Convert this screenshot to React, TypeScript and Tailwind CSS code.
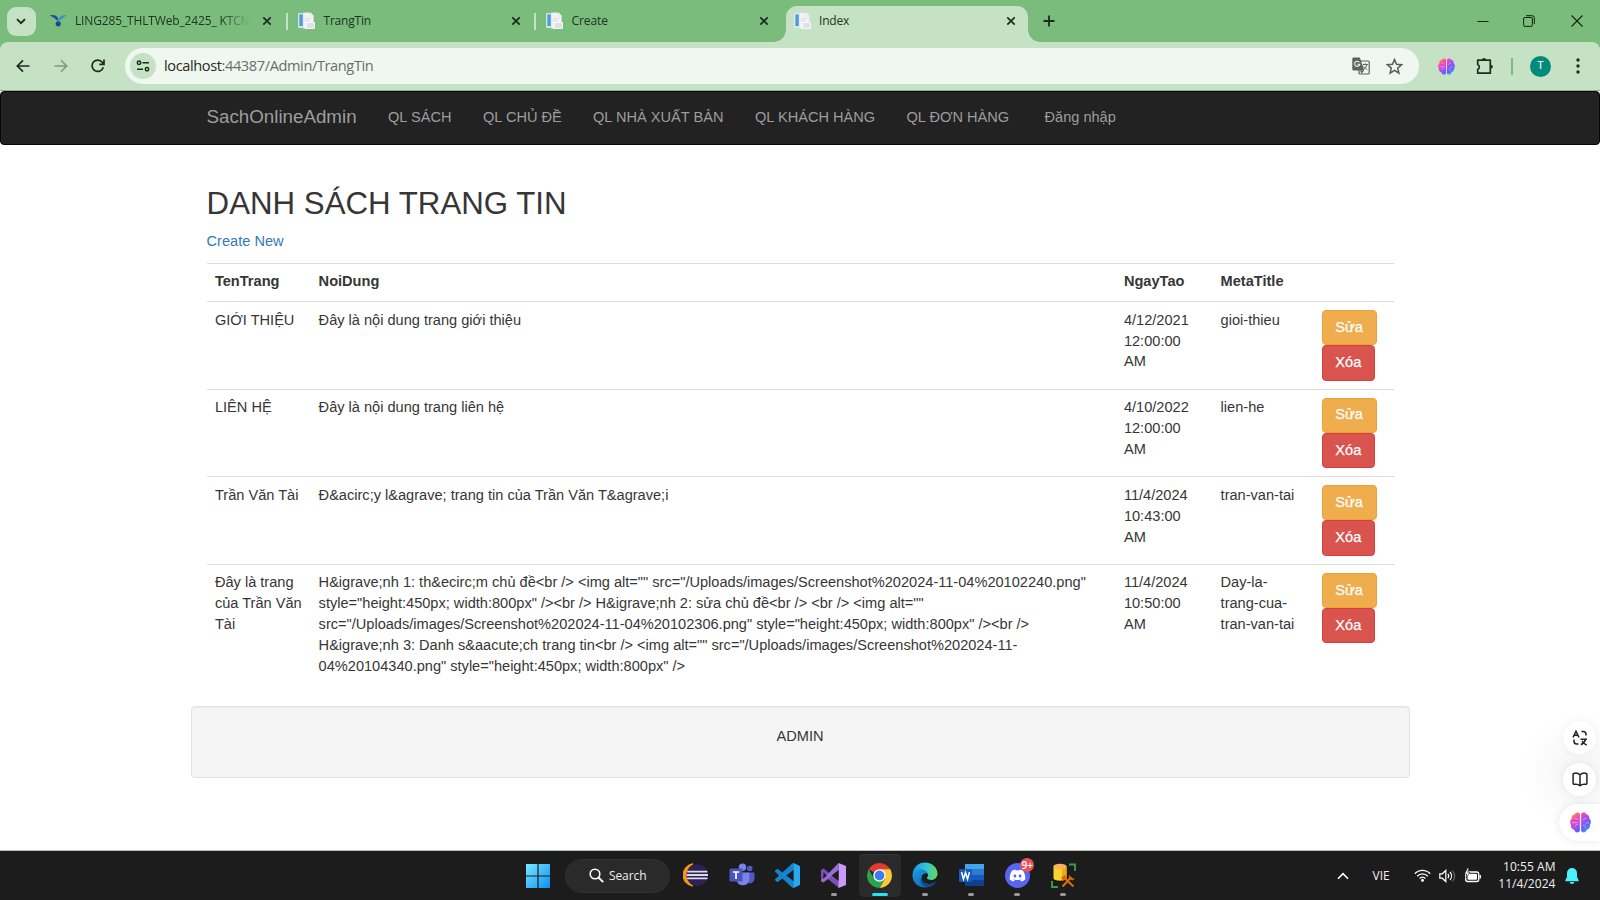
import type { ReactNode } from "react";
import { FaDiscord } from "react-icons/fa6";

function Slot({ w, children }: { w: string; children: ReactNode }) {
  return <div className={`flex h-full shrink-0 items-center justify-center ${w}`}>{children}</div>;
}

function PageIcon() {
  return (
    <svg width="18" height="18" viewBox="0 0 18 18" className="shrink-0">
      <path d="M.5 1.500h9v14h-9z" fill="#fff" stroke="#dfe6ec" strokeWidth=".6" />
      <path d="M1.300 2.300h3.500v12H1.300z" fill="#4b9ad8" />
      <path d="M5.500 .8h7l3 3v12.700h-10z" fill="#f1f2f6" stroke="#d9dbe2" strokeWidth=".6" />
      <path d="M12.500.8v3h3" fill="#fff" stroke="#ccd" strokeWidth=".5" />
      <path d="M7 6.500h6M7 8.500h4" stroke="#dcdde4" />
      <path d="M9 10.500h7.500v6H8z" fill="#dfe1ea" stroke="#fff" strokeWidth=".8" />
    </svg>
  );
}

function Close() {
  return (
    <svg width="10" height="10" viewBox="0 0 10 10">
      <path d="M1.300 1.300l7.400 7.400M8.700 1.300L1.300 8.700" stroke="#1d2b1e" strokeWidth="1.700" />
    </svg>
  );
}

function Brain({ size }: { size: number }) {
  return (
    <svg width={size} height={size} viewBox="0 0 20 20">
      <defs>
        <linearGradient id="brainGradient" x1="0.1" y1="0" x2=".9" y2="1">
          <stop offset="0" stopColor="#ffa02e" />
          <stop offset=".28" stopColor="#f545b8" />
          <stop offset=".5" stopColor="#a94df5" />
          <stop offset=".72" stopColor="#6a5cf6" />
          <stop offset="1" stopColor="#22c3f5" />
        </linearGradient>
      </defs>
      <path
        fill="url(#brainGradient)"
        d="M9.400 1.800C8.300-.1 5 .2 4.500 2.200 2.400 2.500 1.200 4.300 1.700 6.200 0 7.300-.4 10.400 1 12.200c-.4 2.200.8 4.200 2.800 4.500.9 3 4.500 3.600 5.600 1.400zM10.600 1.800c1.100-1.900 4.400-1.600 4.900.4 2.100.3 3.300 2.100 2.800 4 1.700 1.100 2.100 4.200.7 6 .4 2.200-.8 4.200-2.800 4.500-.9 3-4.500 3.600-5.600 1.400z"
      />
      <path
        d="M4.500 6.300c1.500-.2 2.500.4 3 1.500M2 10.200h5.500M5 13.700c.3-1.500 1.300-2 2.600-1.900M15.500 6.300c-1.500-.2-2.500.4-3 1.500M18 10.200c-2 .1-3 .6-3.500 1.800M12.500 13c1-.2 2 .4 2.300 1.800"
        fill="none"
        stroke="#fff"
        strokeOpacity=".5"
        strokeWidth=".9"
      />
    </svg>
  );
}

function Translate() {
  return (
    <svg width="18" height="18" viewBox="0 0 18 18" className="ml-auto">
      <rect x="7" y="4" width="10.200" height="13" rx="1" fill="#eff7f0" stroke="#5d635e" strokeWidth="1.200" />
      <path d="M1.500.5h6.300l4.600 13H1.500A1.200 1.200 0 0 1 .3 12.300V1.700A1.200 1.200 0 0 1 1.500.5z" fill="#5d635e" />
      <path d="M7.300 5.200A2.600 2.600 0 1 0 7.800 7.300H5.400" fill="none" stroke="#eff7f0" strokeWidth="1.100" />
      <path d="M10.800 7.500h5M13.300 6.300v1.200M15 7.500c-.5 2.200-1.800 3.700-3.500 5M12 9.300c.8 1.500 2 2.600 3.300 3.400" fill="none" stroke="#5d635e" strokeWidth="1" />
      <path d="M8 13.500h4.200L9.500 16.800z" fill="#5d635e" />
    </svg>
  );
}

function TabStrip() {
  return (
    <div className="flex h-[42px] items-center bg-[#7abc7c] text-[12px] text-[#1e3320]">
      <div className="ml-[6.500px] flex h-[29px] w-[29px] items-center justify-center rounded-[9px] bg-[#c5e2c5]">
        <svg width="10" height="7" viewBox="0 0 10 7">
          <path d="M1 1.200l4 4 4-4" fill="none" stroke="#1d2b1e" strokeWidth="1.900" />
        </svg>
      </div>
      <div className="ml-[14.500px] flex w-[238px] items-center">
        <svg width="17" height="14" viewBox="0 0 17 14" className="shrink-0">
          <path d="M0 1.500C4 .3 7 1.700 8.300 4.600L7.500 7C5.500 5 4 3.700 0 1.500z" fill="#1f4f9c" />
          <path d="M17 1.500C12.500.3 9.500 2.500 8.700 5.500L8 8.500C10 6.500 12 3.500 17 1.500z" fill="#2c8fd6" />
          <circle cx="8.200" cy="9.800" r="2.600" fill="#1c4795" />
        </svg>
        <div className="ml-[8px] w-[174px] overflow-hidden whitespace-nowrap [mask-image:linear-gradient(to_right,black_84%,transparent_100%)]">
          <span className="tracking-[-0.150px]">LING285_THLTWeb_2425_ KTCN</span>
        </div>
        <div className="ml-[13px]">
          <Close />
        </div>
        <div className="ml-auto h-[17px] w-[2px] bg-[#c5e2c5]" />
      </div>
      <div className="flex w-[248px] items-center">
        <div className="ml-[10px]"><PageIcon /></div>
        <span className="ml-[7.500px] w-[187.500px] tracking-[-0.2px]">TrangTin</span>
        <Close />
        <div className="ml-auto h-[17px] w-[2px] bg-[#c5e2c5]" />
      </div>
      <div className="flex w-[238px] items-center">
        <div className="ml-[9.500px]"><PageIcon /></div>
        <span className="ml-[8px] w-[187.500px] tracking-[-0.1px]">Create</span>
        <Close />
      </div>
      <div className="h-[12px] w-[12px] self-end bg-[radial-gradient(circle_at_0_0,#7abc7c_11.500px,#c5e2c5_12px)]" />
      <div className="flex h-[36px] w-[242px] items-center self-end rounded-t-[11px] bg-[#c5e2c5] pb-[6px]">
        <div className="ml-[8px]"><PageIcon /></div>
        <span className="ml-[7px] w-[187px] tracking-[-0.2px]">Index</span>
        <Close />
      </div>
      <div className="h-[12px] w-[12px] self-end bg-[radial-gradient(circle_at_100%_0,#7abc7c_11.500px,#c5e2c5_12px)]" />
      <svg width="12" height="12" viewBox="0 0 12 12" className="ml-[3px]">
        <path d="M6 .5v11M.5 6h11" stroke="#1d2b1e" strokeWidth="1.800" />
      </svg>
      <div className="ml-auto flex h-full items-center pr-[17px]">
        <svg width="12" height="12" viewBox="0 0 12 12">
          <path d="M.5 6.500h11" stroke="#14230f" />
        </svg>
        <svg width="12" height="12" viewBox="0 0 12 12" className="ml-[34.500px]">
          <rect x=".6" y="2.500" width="8.800" height="8.900" rx="1.500" fill="none" stroke="#14230f" />
          <path d="M3 .7h6a2.300 2.300 0 0 1 2.300 2.300v6" fill="none" stroke="#14230f" />
        </svg>
        <svg width="12" height="12" viewBox="0 0 12 12" className="ml-[36px]">
          <path d="M.5.5l11 11M11.500.5l-11 11" stroke="#14230f" strokeWidth="1.100" />
        </svg>
      </div>
    </div>
  );
}

function Toolbar() {
  return (
    <div className="bg-[#7abc7c]">
      <div className="flex h-[49px] items-center rounded-t-[8px] border-b border-[#92ae93] bg-[#c5e2c5]">
        <Slot w="w-[46px]">
          <svg width="14" height="14" viewBox="0 0 14 14">
            <path d="M13.500 7H1.500M7 1.300L1.300 7 7 12.700" fill="none" stroke="#1f2b20" strokeWidth="1.700" />
          </svg>
        </Slot>
        <Slot w="w-[29px]">
          <svg width="14" height="14" viewBox="0 0 14 14">
            <path d="M.5 7h12M7 1.300L12.700 7 7 12.700" fill="none" stroke="#829783" strokeWidth="1.600" />
          </svg>
        </Slot>
        <Slot w="w-[46px]">
          <svg width="14" height="14" viewBox="0 0 14 14">
            <path d="M12.300 8.300A5.700 5.700 0 1 1 11.300 3.200L12.800 5M13 .6V5.300H8.300" fill="none" stroke="#1f2b20" strokeWidth="1.700" />
          </svg>
        </Slot>
        <div className="ml-[4px] flex h-[36px] w-[1294px] items-center rounded-full bg-[#eff7f0]">
          <div className="ml-[5px] flex h-[26px] w-[26px] items-center justify-center rounded-full bg-[#c5e2c5]">
            <svg width="14" height="12" viewBox="0 0 14 12">
              <g fill="none" stroke="#1f2b20" strokeWidth="1.500">
                <circle cx="3" cy="2.700" r="1.700" />
                <path d="M6.500 2.700H13M1 9.300h6" />
                <circle cx="11" cy="9.300" r="1.700" />
              </g>
            </svg>
          </div>
          <div className="ml-[8px] text-[14.600px] tracking-[-0.4px] text-[#66706a]">
            <span className="text-[#1f2b20]">localhost</span>:44387/Admin/TrangTin
          </div>
          <Translate />
          <svg width="17" height="17" viewBox="0 0 17 17" className="mr-[16px] ml-[16px]">
            <path
              d="M8.500 1.600l2 4.700 5.100.4-3.900 3.400 1.200 5-4.400-2.700-4.400 2.700 1.200-5L1.400 6.700l5.100-.4z"
              fill="none"
              stroke="#555e57"
              strokeWidth="1.500"
            />
          </svg>
        </div>
        <div className="ml-[19px]"><Brain size={17} /></div>
        <svg width="18" height="18" viewBox="0 0 18 18" className="ml-[21px]">
          <path
            d="M1.700 3.200h12.600v13H1.700v-3.800c2.200-.6 2.200-4 0-4.600z"
            fill="none"
            stroke="#1f2b20"
            strokeWidth="1.700"
            strokeLinejoin="round"
          />
          <path d="M6 2.900a2 2 0 0 1 4 0zM14.800 7.700a2 2 0 0 1 0 4z" fill="#1f2b20" />
        </svg>
        <div className="ml-[17px] h-[17px] w-[2px] bg-[#7abc7c]" />
        <div className="ml-[17px] flex h-[21px] w-[21px] items-center justify-center rounded-full bg-[#048a7b] font-[Roboto] text-[11px] text-white">
          T
        </div>
        <svg width="4" height="16" viewBox="0 0 4 16" className="ml-[25px]">
          <g fill="#1f2b20">
            <circle cx="2" cy="2" r="1.700" />
            <circle cx="2" cy="8" r="1.700" />
            <circle cx="2" cy="14" r="1.700" />
          </g>
        </svg>
      </div>
    </div>
  );
}

type Row = { name: string; body: string[]; date: string[]; meta: string[] };

const rows: Row[] = [
  {
    name: "GIỚI THIỆU",
    body: ["Đây là nội dung trang giới thiệu"],
    date: ["4/12/2021", "12:00:00", "AM"],
    meta: ["gioi-thieu"],
  },
  {
    name: "LIÊN HỆ",
    body: ["Đây là nội dung trang liên hệ"],
    date: ["4/10/2022", "12:00:00", "AM"],
    meta: ["lien-he"],
  },
  {
    name: "Trần Văn Tài",
    body: ["Đ&acirc;y l&agrave; trang tin của Trần Văn T&agrave;i"],
    date: ["11/4/2024", "10:43:00", "AM"],
    meta: ["tran-van-tai"],
  },
  {
    name: "Đây là trang\ncủa Trần Văn\nTài",
    body: [
      'H&igrave;nh 1: th&ecirc;m chủ đề<br /> <img alt="" src="/Uploads/images/Screenshot%202024-11-04%20102240.png"',
      'style="height:450px; width:800px" /><br /> H&igrave;nh 2: sửa chủ đề<br /> <br /> <img alt=""',
      'src="/Uploads/images/Screenshot%202024-11-04%20102306.png" style="height:450px; width:800px" /><br />',
      'H&igrave;nh 3: Danh s&aacute;ch trang tin<br /> <img alt="" src="/Uploads/images/Screenshot%202024-11-',
      '04%20104340.png" style="height:450px; width:800px" />',
    ],
    date: ["11/4/2024", "10:50:00", "AM"],
    meta: ["Day-la-", "trang-cua-", "tran-van-tai"],
  },
];

const grid = "grid grid-cols-[103.700px_805.300px_96.700px_101px_80.800px] border-t border-[#dddddd]";
const cell = "whitespace-pre px-[8.330px] pt-[7.700px] pb-[8.800px]";

function Site() {
  return (
    <div className="h-[760px] bg-white font-['Liberation_Sans',Arial,sans-serif] text-[14.590px] leading-[20.833px] text-[#363636]">
      <nav className="flex h-[54px] items-center rounded-[4px] border border-[#080808] bg-[#222222] pb-[1.500px] pl-[205.500px] text-[#9d9d9d]">
        <span className="w-[181.500px] text-[18.750px]">SachOnlineAdmin</span>
        <span className="w-[95px]">QL SÁCH</span>
        <span className="w-[110px]">QL CHỦ ĐỀ</span>
        <span className="w-[162px]">QL NHÀ XUẤT BẢN</span>
        <span className="w-[151.500px]">QL KHÁCH HÀNG</span>
        <span className="w-[138px]">QL ĐƠN HÀNG</span>
        <span>Đăng nhập</span>
      </nav>
      <main className="ml-[206.600px] w-[1187.500px] pt-[42px]">
        <h2 className="text-[31.250px] leading-[34.400px]">DANH SÁCH TRANG TIN</h2>
        <div className="mt-[9.500px] text-[#337ab7]">Create New</div>
        <div className="mt-[11px]">
          <div className={`${grid} font-bold`}>
            <div className={cell}>TenTrang</div>
            <div className={cell}>NoiDung</div>
            <div className={cell}>NgayTao</div>
            <div className={cell}>MetaTitle</div>
          </div>
          {rows.map((r) => (
            <div key={r.name} className={grid}>
              <div className={cell}>{r.name}</div>
              <div className={cell}>{r.body.join("\n")}</div>
              <div className={cell}>{r.date.join("\n")}</div>
              <div className={cell}>{r.meta.join("\n")}</div>
              <div className="flex flex-col items-start px-[8.330px] py-[8.100px] text-white [-webkit-text-stroke:0.25px_white]">
                <div className="flex h-[35.200px] w-[55px] items-center justify-center rounded-[4px] border border-[#eea236] bg-[#f0ad4e] pb-[1px]">
                  Sửa
                </div>
                <div className="flex h-[35.200px] w-[53.500px] items-center justify-center rounded-[4px] border border-[#d43f3a] bg-[#d9534f] pb-[1px]">
                  Xóa
                </div>
              </div>
            </div>
          ))}
        </div>
      </main>
      <footer className="mx-auto mt-[20.500px] h-[72.500px] w-[1219px] rounded-[4px] border border-[#e3e3e3] bg-[#f5f5f5] pt-[19.300px] text-center shadow-[inset_0_1px_1px_rgba(0,0,0,0.05)]">
        ADMIN
      </footer>
    </div>
  );
}

function SideButtons() {
  return (
    <div className="absolute top-[721px] right-0 flex w-[41px] flex-col items-center">
      <div className="flex h-[33px] w-[33px] items-center justify-center rounded-full bg-white shadow-[0_35px_45px_12px_rgba(0,0,0,0.07),0_0_8px_rgba(0,0,0,0.05)]">
        <svg width="16" height="16" viewBox="0 0 16 16" fill="none" stroke="#222" strokeWidth="1.500">
          <path d="M1 7.500L4 1.200 7 7.500M2 5.300h4M9.500 1.500h1.700c1.800 0 2.800 1 2.800 2.800v1.200M2 9.500v1.700C2 13 3 14 4.800 14h1.700M8.500 9.300h6.500M13.500 9.500c-.8 2.500-2.500 4.300-4.700 5.200M10 11c1 2 2.500 3.300 4.800 3.900" />
        </svg>
      </div>
      <div className="mt-[9px] flex h-[33px] w-[33px] items-center justify-center rounded-full bg-white shadow-[0_0_8px_rgba(0,0,0,0.07)]">
        <svg width="16" height="15" viewBox="0 0 16 15" fill="none" stroke="#222" strokeWidth="1.500" strokeLinejoin="round">
          <path d="M8 2.800C6 1 3.500.8 1.800 1.500a1 1 0 0 0-.7 1v8.800c0 .7.600 1.100 1.300 1 2-.3 4 0 5.600 1.400 1.600-1.400 3.600-1.700 5.600-1.400.7.100 1.300-.3 1.300-1V2.500a1 1 0 0 0-.7-1C12.500.8 10 1 8 2.800zM8 2.800v10.700" />
        </svg>
      </div>
      <div className="mt-[8px] flex h-[37px] w-[41px] items-center justify-center rounded-l-full bg-white pl-[1px] shadow-[0_0_8px_rgba(0,0,0,0.1)]">
        <Brain size={21} />
      </div>
    </div>
  );
}

function Eclipse() {
  return (
    <svg width="26" height="24" viewBox="0 0 26 24">
      <path d="M10 .8A11.300 11.300 0 0 0 10 23.200 13 13 0 0 1 10 .8z" fill="#f7941e" stroke="#f7941e" strokeWidth="1.200" />
      <circle cx="14.300" cy="12" r="10.800" fill="#2c2255" />
      <path d="M4.200 8.600h20.200M3.700 12h21.300M4.200 15.400h20.200" stroke="#dedbe9" strokeWidth="1.900" />
    </svg>
  );
}

function Teams() {
  return (
    <svg width="26" height="24" viewBox="0 0 26 24">
      <circle cx="20.700" cy="5.500" r="2.800" fill="#5059c9" />
      <path d="M17 9.500h7.500c.6 0 1 .4 1 1V16a4.500 4.500 0 0 1-7 3.600z" fill="#5059c9" />
      <circle cx="13.500" cy="4.300" r="3.700" fill="#7b83eb" />
      <path d="M8 9.500h11.300c.6 0 1 .4 1 1V17a6.500 6.500 0 0 1-12.800 0z" fill="#7b83eb" />
      <rect x=".5" y="5.500" width="13" height="13" rx="1.200" fill="#4b53bc" />
      <path d="M3.800 9h6.400M7 9v7" stroke="#fff" strokeWidth="1.700" />
    </svg>
  );
}

function Code() {
  return (
    <svg width="25" height="25" viewBox="0 0 24 24">
      <path
        fill="#1484cf"
        d="M23.150 2.587L18.210.210a1.494 1.494 0 0 0-1.705.290l-9.460 8.630-4.120-3.128a.999.999 0 0 0-1.276.057L.327 7.261A1 1 0 0 0 .326 8.740L3.899 12 .326 15.260a1 1 0 0 0 .001 1.479L1.650 17.940a.999.999 0 0 0 1.276.057l4.120-3.128 9.460 8.630a1.492 1.492 0 0 0 1.704.290l4.942-2.377A1.500 1.500 0 0 0 24 20.060V3.939a1.500 1.500 0 0 0-.850-1.352zm-5.146 14.861L10.826 12l7.178-5.448v10.896z"
      />
      <path d="M18 .2l5.150 2.390c.5.200.85.800.85 1.350v16.120c0 .6-.3 1.100-.85 1.350L18 23.800z" fill="#2aa7f0" />
    </svg>
  );
}

function Studio() {
  return (
    <svg width="25" height="25" viewBox="0 0 25 25">
      <path d="M0 7l2.500-1.500L18 18v7L2.500 12.500v5l-.5 1.500L0 18z" fill="#7b4fb5" />
      <path d="M17.500 0v7.200L2.500 19.500 0 18v-.8l2.500-1.700z" fill="#9a6ad6" />
      <path d="M17.500 0L25 3v19l-7.500 3z" fill="#c79bf7" />
      <path d="M17.500 7.200v10.500L10.800 12.400z" fill="#1c1c1c" />
      <path d="M2.500 9.300v6.300l3.200-3.100z" fill="#1c1c1c" />
    </svg>
  );
}

function Chrome() {
  return (
    <svg width="25" height="25" viewBox="0 0 24 24">
      <path d="M12 12L1.610 6A12 12 0 0 1 22.390 6z" fill="#e33b2e" />
      <path d="M22.390 6A12 12 0 0 1 12 24l5.200-9L12 6z" fill="#fcc934" />
      <path d="M1.610 6A12 12 0 0 0 12 24l5.200-9H12L6.800 15z" fill="#2ba24c" />
      <circle cx="12" cy="12" r="6" fill="#fff" />
      <circle cx="12" cy="12" r="4.700" fill="#3b7ded" />
    </svg>
  );
}

function Edge() {
  return (
    <svg width="26" height="26" viewBox="0 0 26 26">
      <defs>
        <linearGradient id="edgeTop" x1="0" y1=".4" x2="1" y2=".5">
          <stop offset="0" stopColor="#1a93e0" />
          <stop offset=".5" stopColor="#2fc3df" />
          <stop offset="1" stopColor="#62d957" />
        </linearGradient>
        <linearGradient id="edgeLow" x1="0" y1="0" x2="1" y2="1">
          <stop offset="0" stopColor="#1b9de2" />
          <stop offset="1" stopColor="#0f59a5" />
        </linearGradient>
      </defs>
      <path d="M.6 11.500C1.500 5 6.500.5 13 .5c7.500 0 12.500 5.500 12.500 11 0 4-3 6.500-6.300 6.500-3 0-4.800-1.300-4.200-2.400 1-1 1.400-2 1-3.300C14 7.500 5 7 .6 11.500z" fill="url(#edgeTop)" />
      <path d="M.5 13C.8 9.500 4.500 7.300 8.500 7.300c4 0 7 2.300 7.500 4.800-2-1.500-5-.6-6 2-1.300 4.400 2 8 7 8 2.500 0 4.700-.8 6.800-2.300C21.500 23.500 17.500 25.500 13 25.500 6 25.500.2 20 .5 13z" fill="url(#edgeLow)" />
      <path d="M10 14.100c-1.300 4.400 2 8 7 8 2.500 0 4.700-.8 6.800-2.300-2 3.200-5 5-8.300 5.500-5.500-.8-9-6-5.500-11.200z" fill="#114a8b" />
    </svg>
  );
}

function Word() {
  return (
    <svg width="25" height="24" viewBox="0 0 25 24">
      <path d="M6 1h19v5.700H6z" fill="#41a5ee" />
      <path d="M6 6.500h19v5.700H6z" fill="#2b7cd3" />
      <path d="M6 12h19v5.700H6z" fill="#185abd" />
      <path d="M6 17.500h19V23H6z" fill="#103f91" />
      <rect x="0" y="6" width="13" height="13" rx="1" fill="#185abd" />
      <path d="M2.500 9l2 7 2-6.500 2 6.500 2-7" fill="none" stroke="#fff" strokeWidth="1.500" />
    </svg>
  );
}

function DbTool() {
  return (
    <svg width="25" height="25" viewBox="0 0 25 25">
      <path d="M18 1.500h6V8M1 18v6h6" fill="none" stroke="#3c9b46" strokeWidth="1.900" />
      <path d="M2.500 3.500v11.800c0 3.200 13 3.200 13 0V3.500z" fill="#fcd22f" />
      <path d="M11 4h4.500v11.800L11 17.500z" fill="#e9ac13" />
      <ellipse cx="9" cy="3.500" rx="6.500" ry="2.700" fill="#f7b262" />
      <path d="M11.500 23.500l9-9.500M13 14.500l9.500 9" stroke="#d9680f" strokeWidth="2.200" />
      <path d="M10 15l4-3 2 2-3.500 3.500zM18.500 11.500l1 3.500 4.500.5-2.500 2-4-2z" fill="#d9680f" />
    </svg>
  );
}

function TaskItem({ children, state = "" }: { children: ReactNode; state?: "" | "open" | "active" }) {
  return (
    <div
      className={`relative flex h-[43px] w-[42px] items-center justify-center rounded-[5px] pb-[1px] ${
        state === "active" ? "bg-[#2a2a2a] shadow-[inset_0_1px_0_#363636]" : ""
      }`}
    >
      {children}
      {state === "open" && <span className="absolute bottom-[1.500px] h-[3px] w-[6px] rounded-full bg-[#9a9a9a]" />}
      {state === "active" && <span className="absolute bottom-[1.500px] h-[3px] w-[16px] rounded-full bg-[#1fe5f7]" />}
    </div>
  );
}

function Taskbar() {
  return (
    <div className="flex h-[49px] items-center bg-[#1c1c1c] text-[12px] text-[#f0f0f0] shadow-[0_-1px_0_#b5c2b6]">
      <svg width="24" height="24" viewBox="0 0 24 24" className="ml-[526px]">
        <defs>
          <linearGradient id="startGradient" x1="0" y1="0" x2="1" y2="1">
            <stop offset="0" stopColor="#7ae9ff" />
            <stop offset="1" stopColor="#0c8ef2" />
          </linearGradient>
        </defs>
        <path fill="url(#startGradient)" d="M0 0h11.400v11.400H0zM12.600 0H24v11.400H12.600zM0 12.600h11.400V24H0zM12.600 12.600H24V24H12.600z" />
      </svg>
      <div className="ml-[15px] flex h-[34px] w-[105px] items-center rounded-full border border-[#303030] bg-[#2a2a2a]">
        <svg width="15" height="15" viewBox="0 0 15 15" className="ml-[23px]">
          <circle cx="6" cy="6" r="4.800" fill="none" stroke="#fff" strokeWidth="1.600" />
          <path d="M9.500 9.500l4.700 4.700" stroke="#fff" strokeWidth="1.800" />
        </svg>
        <span className="ml-[5px] tracking-[-0.1px]">Search</span>
      </div>
      <div className="ml-[5px] flex gap-[3.900px]">
        <TaskItem><Eclipse /></TaskItem>
        <TaskItem><Teams /></TaskItem>
        <TaskItem><Code /></TaskItem>
        <TaskItem state="open"><Studio /></TaskItem>
        <TaskItem state="active"><Chrome /></TaskItem>
        <TaskItem state="open"><Edge /></TaskItem>
        <TaskItem state="open"><Word /></TaskItem>
        <TaskItem state="open">
          <div className="flex h-[25px] w-[25px] items-center justify-center rounded-full bg-[#5865f2]">
            <FaDiscord size={17} color="#fff" />
          </div>
          <span className="absolute top-[4px] right-[4px] flex h-[14px] w-[14px] items-center justify-center rounded-full bg-[#e8505a] text-[10px] font-semibold text-white">
            9+
          </span>
        </TaskItem>
        <TaskItem state="open"><DbTool /></TaskItem>
      </div>
      <div className="ml-auto flex items-center">
        <svg width="12" height="8" viewBox="0 0 12 8">
          <path d="M1 6.700l5-5 5 5" fill="none" stroke="#fff" strokeWidth="1.600" />
        </svg>
        <span className="ml-[24px] w-[19px]">VIE</span>
        <svg width="17" height="13" viewBox="0 0 17 13" className="ml-[22px]">
          <g fill="none" stroke="#fff" strokeWidth="1.300">
            <path d="M.8 4.800c4.300-4.700 11.100-4.700 15.400 0M3.200 7.200c3-3.200 7.600-3.200 10.600 0M5.600 9.500c1.700-1.800 4.100-1.800 5.800 0" />
          </g>
          <circle cx="8.500" cy="11.200" r="1.500" fill="#fff" />
        </svg>
        <svg width="17" height="14" viewBox="0 0 17 14" className="ml-[8px]">
          <g fill="none" stroke="#fff" strokeWidth="1.200">
            <path d="M.8 4.800h2.500L6.800 1.500v11L3.300 9.200H.8zM8.900 4.800c1 1.300 1 3.100 0 4.400M11 3c2 2.300 2 5.700 0 8" />
            <path d="M13.500 1.500c2.600 3.300 2.600 7.700 0 11" stroke="#666" />
          </g>
        </svg>
        <svg width="18" height="15" viewBox="0 0 18 15" className="ml-[8px]">
          <rect x="1.700" y="4" width="13" height="9.500" rx="2" fill="none" stroke="#fff" strokeWidth="1.300" />
          <rect x="3.500" y="5.800" width="9.500" height="6" rx="1" fill="#fff" />
          <path d="M16.200 7v3.500" stroke="#fff" strokeWidth="1.500" />
          <path d="M3.500 0L.5 6h2.200L2 10l4-5.700H3.600L5 0z" fill="#fff" stroke="#1c1c1c" strokeWidth=".6" />
        </svg>
        <div className="ml-[8px] w-[66px] text-right leading-[16.500px] tracking-[0.050px] whitespace-nowrap">
          <div>10:55 AM</div>
          <div>11/4/2024</div>
        </div>
        <svg width="14" height="16" viewBox="0 0 14 16" className="mr-[21.500px] ml-[9px]">
          <path d="M7 0a5 5 0 0 1 5 5v4l1.700 3.300c.2.500 0 .9-.5.900H.8c-.5 0-.7-.4-.5-.9L2 9V5a5 5 0 0 1 5-5zM4.800 14h4.400a2.200 2 0 0 1-4.400 0z" fill="#4cf0fb" />
        </svg>
      </div>
    </div>
  );
}

export default function App() {
  return (
    <div className="relative flex h-[900px] w-[1600px] flex-col overflow-hidden bg-white font-['Open_Sans','Noto_Sans',sans-serif]">
      <TabStrip />
      <Toolbar />
      <Site />
      <SideButtons />
      <Taskbar />
    </div>
  );
}
